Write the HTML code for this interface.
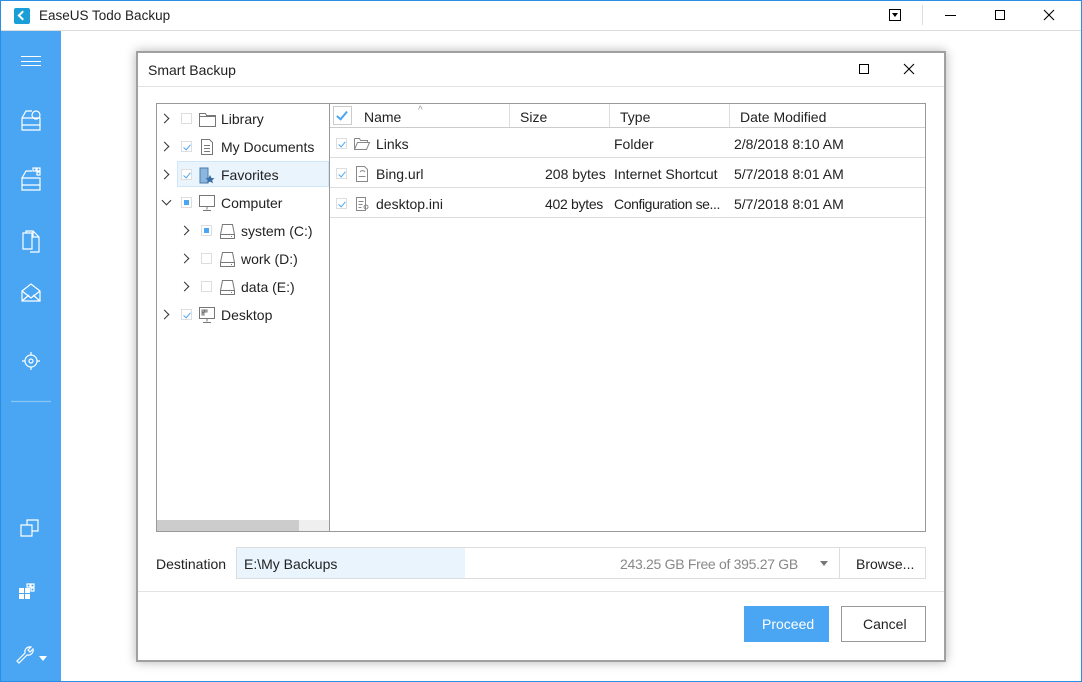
<!DOCTYPE html>
<html><head><style>
*{margin:0;padding:0;box-sizing:border-box}
body{width:1082px;height:682px;position:relative;overflow:hidden;background:#fff;font-family:"Liberation Sans",sans-serif;font-size:14px;color:#222}
.a{position:absolute}
.t{position:absolute;white-space:nowrap;line-height:16px;font-size:14px}
.cb{position:absolute;width:11px;height:11px;border:1px solid #ddd;background:#fff}
.cb.c::after{content:"";position:absolute;left:3px;top:1px;width:3px;height:6px;border:solid #4aa6f2;border-width:0 1.3px 1.3px 0;transform:rotate(40deg)}
.cb.p::after{content:"";position:absolute;left:2px;top:2px;width:5px;height:5px;background:#4aa6f2}
.chev{position:absolute;width:7px;height:7px;border:solid #333;border-width:1.2px 1.2px 0 0;transform:rotate(45deg)}
.chev.d{transform:rotate(135deg)}
.hl{position:absolute;height:1px;background:#ddd}
</style></head><body>
<div class="a" style="left:0;top:0;width:1082px;height:682px;border:1px solid #2b8ee6"></div>
<div class="a" style="left:14px;top:8px;width:16px;height:16px;background:#1a9ed8;border-radius:2px"></div>
<div class="a" style="left:19px;top:12px;width:7px;height:7px;border:solid #fff;border-width:0 0 2px 2px;transform:rotate(45deg)"></div>
<div class="t" style="left:39px;top:8px;font-size:13.5px">EaseUS Todo Backup</div>
<div class="a" style="left:889px;top:9px;width:12px;height:12px;border:1px solid #000"></div>
<div class="a" style="left:892px;top:13px;border:3px solid transparent;border-top:4px solid #000"></div>
<div class="a" style="left:922px;top:5px;width:1px;height:20px;background:#ddd"></div>
<div class="a" style="left:945px;top:15px;width:11px;height:1px;background:#000"></div>
<div class="a" style="left:995px;top:10px;width:10px;height:10px;border:1px solid #000"></div>
<svg class="a" style="left:1043px;top:9px" width="12" height="12" stroke="#000" stroke-width="1.1"><path d="M1 1l10 10M11 1L1 11"/></svg>
<div class="a" style="left:1px;top:30px;width:1080px;height:1px;background:#dcdcdc"></div>
<div class="a" style="left:1px;top:31px;width:60px;height:650px;background:#4aa6f2"></div>
<div class="a" style="left:21px;top:56px;width:20px;height:10px;border-top:1px solid #fff;border-bottom:1px solid #fff"></div>
<div class="a" style="left:21px;top:61px;width:20px;height:1px;background:#fff"></div>
<svg class="a" style="left:0;top:100px" width="62" height="580" fill="none" stroke="#fff" stroke-width="1.2">
<path d="M22 18h18v12H22zM22 18l4-7h6M22 25h18"/><circle cx="36" cy="15" r="4"/>
<path d="M22 78h18v12H22zM22 78l4-7h6M22 85h18"/><rect x="33" y="68" width="3" height="3"/><rect x="37" y="68" width="3" height="3"/><rect x="37" y="72" width="3" height="3"/>
<path d="M23 133h9v16h-9zM26 133v-2h7l6 6v15h-9M33 131v6h6"/>
<path d="M22 191l9-7 9 7v10H22zM22 191l9 7 9-7M22 201l7-6M40 201l-7-6"/>
<circle cx="31" cy="261" r="6"/><circle cx="31" cy="261" r="2"/><path d="M31 252v3M31 267v3M22 261h3M37 261h3"/>
<path d="M11 301.5h40" stroke-opacity=".35"/>
<path d="M21 425h11v11H21zM27 425v-5h11v11h-6"/>
<path d="M27 484h3v3h-3zM31 484h3v3h-3zM31 488h3v3h-3z"/>
<path d="M17 561l8-8a5 5 0 0 1 6-6l-3 3 2 2 3-3a5 5 0 0 1-6 6l-8 8z"/>
</svg>
<div class="a" style="left:19px;top:588px;width:5px;height:5px;background:#fff"></div><div class="a" style="left:25px;top:588px;width:5px;height:5px;background:#fff"></div><div class="a" style="left:19px;top:594px;width:5px;height:5px;background:#fff"></div><div class="a" style="left:25px;top:594px;width:5px;height:5px;background:#fff"></div>
<div class="a" style="left:39px;top:656px;border:4px solid transparent;border-top:5px solid #fff"></div>
<div class="a" style="left:136px;top:51px;width:810px;height:611px;border:2px solid #a0a0a0;box-shadow:0 0 10px rgba(0,0,0,.3);background:#fff"></div>
<div class="t" style="left:148px;top:62px">Smart Backup</div>
<div class="a" style="left:859px;top:64px;width:10px;height:10px;border:1px solid #000"></div>
<svg class="a" style="left:903px;top:63px" width="12" height="12" stroke="#000" stroke-width="1.1"><path d="M1 1l10 10M11 1L1 11"/></svg>
<div class="a" style="left:138px;top:86px;width:806px;height:1px;background:#e3e3e3"></div>
<div class="a" style="left:156px;top:103px;width:770px;height:429px;border:1px solid #999"></div>
<div class="a" style="left:329px;top:104px;width:1px;height:427px;background:#999"></div>
<div class="a" style="left:157px;top:520px;width:172px;height:11px;background:#efefef"></div>
<div class="a" style="left:157px;top:520px;width:142px;height:11px;background:#ccc"></div>
<div class="a" style="left:177px;top:161px;width:152px;height:26px;background:#e9f4fd;border:1px solid #cde6fa"></div>

<div class="chev" style="left:161px;top:115px"></div><div class="cb" style="left:181px;top:113px"></div>
<svg class="a" style="left:198px;top:110px" width="20" height="18" fill="none" stroke="#777"><path d="M1.5 3.5h6l1 2h9v11h-16z M1.5 6.5h16"/></svg>
<div class="t" style="left:221px;top:111px">Library</div>
<div class="chev" style="left:161px;top:143px"></div><div class="cb c" style="left:181px;top:141px"></div>
<svg class="a" style="left:198px;top:138px" width="20" height="18" fill="none" stroke="#777"><path d="M3.5 1.5h8l3 3v12h-11z M6 7.5h6M6 10.5h6M6 13.5h6"/></svg>
<div class="t" style="left:221px;top:139px">My Documents</div>
<div class="chev" style="left:161px;top:171px"></div><div class="cb c" style="left:181px;top:169px"></div>
<svg class="a" style="left:198px;top:166px" width="20" height="18"><path d="M2 2h8v15H2z" fill="#8cb6de" stroke="#4a7db0"/><path d="M12 9l1.5 3 3 .3-2.3 2 .8 3-3-1.7-3 1.7.8-3-2.3-2 3-.3z" fill="#3b6fa3"/></svg>
<div class="t" style="left:221px;top:167px">Favorites</div>
<div class="chev d" style="left:163px;top:197px"></div><div class="cb p" style="left:181px;top:197px"></div>
<svg class="a" style="left:198px;top:194px" width="20" height="18" fill="none" stroke="#777"><path d="M1.5 1.5h15v11h-15zM9 12.5v3M5 16.5h8"/></svg>
<div class="t" style="left:221px;top:195px">Computer</div>
<div class="chev" style="left:181px;top:227px"></div><div class="cb p" style="left:201px;top:225px"></div>
<svg class="a" style="left:218px;top:222px" width="20" height="18" fill="none" stroke="#777"><path d="M4.5 2.5h10l2 10v4h-14v-4zM2.5 12.5h14M13 14.5h1"/></svg>
<div class="t" style="left:241px;top:223px">system (C:)</div>
<div class="chev" style="left:181px;top:255px"></div><div class="cb" style="left:201px;top:253px"></div>
<svg class="a" style="left:218px;top:250px" width="20" height="18" fill="none" stroke="#777"><path d="M4.5 2.5h10l2 10v4h-14v-4zM2.5 12.5h14M13 14.5h1"/></svg>
<div class="t" style="left:241px;top:251px">work (D:)</div>
<div class="chev" style="left:181px;top:283px"></div><div class="cb" style="left:201px;top:281px"></div>
<svg class="a" style="left:218px;top:278px" width="20" height="18" fill="none" stroke="#777"><path d="M4.5 2.5h10l2 10v4h-14v-4zM2.5 12.5h14M13 14.5h1"/></svg>
<div class="t" style="left:241px;top:279px">data (E:)</div>
<div class="chev" style="left:161px;top:311px"></div><div class="cb c" style="left:181px;top:309px"></div>
<svg class="a" style="left:198px;top:306px" width="20" height="18" fill="none" stroke="#777"><path d="M1.5 1.5h15v11h-15zM9 12.5v3M5 16.5h8M4 4h2v2H4zM7 4h2v2H7zM4 7h2v2H4z"/></svg>
<div class="t" style="left:221px;top:307px">Desktop</div>

<div class="hl" style="left:330px;top:127px;width:595px;background:#ccc"></div>
<div class="a" style="left:333px;top:106px;width:19px;height:19px;border:1px solid #ccc"></div>
<div class="a" style="left:339px;top:109px;width:6px;height:11px;border:solid #4aa6f2;border-width:0 2px 2px 0;transform:rotate(40deg)"></div>
<div class="t" style="left:364px;top:109px">Name</div>
<div class="t" style="left:418px;top:103px;font-size:10px;color:#999">^</div>
<div class="a" style="left:509px;top:104px;width:1px;height:23px;background:#ddd"></div>
<div class="t" style="left:520px;top:109px">Size</div>
<div class="a" style="left:609px;top:104px;width:1px;height:23px;background:#ddd"></div>
<div class="t" style="left:620px;top:109px">Type</div>
<div class="a" style="left:729px;top:104px;width:1px;height:23px;background:#ddd"></div>
<div class="t" style="left:740px;top:109px">Date Modified</div>
<div class="hl" style="left:330px;top:157px;width:595px"></div>
<div class="hl" style="left:330px;top:187px;width:595px"></div>
<div class="hl" style="left:330px;top:217px;width:595px"></div>
<div class="cb c" style="left:336px;top:138px"></div>
<svg class="a" style="left:353px;top:135px" width="18" height="18" fill="none" stroke="#888"><path d="M1.5 3.5h5l1 2h7v2M1.5 3.5v11h12l3-7h-12l-3 7"/></svg>
<div class="t" style="left:376px;top:136px">Links</div>
<div class="t" style="left:614px;top:136px">Folder</div>
<div class="t" style="left:734px;top:136px">2/8/2018 8:10 AM</div>
<div class="cb c" style="left:336px;top:168px"></div>
<svg class="a" style="left:353px;top:165px" width="18" height="18" fill="none" stroke="#888"><path d="M3.5 1.5h8l3 3v12h-11zM5.5 11.5h7"/><path d="M7 7a3 3 0 0 1 5 0" /></svg>
<div class="t" style="left:376px;top:166px">Bing.url</div>
<div class="t" style="left:545px;top:166px">208 bytes</div>
<div class="t" style="left:614px;top:166px">Internet Shortcut</div>
<div class="t" style="left:734px;top:166px">5/7/2018 8:01 AM</div>
<div class="cb c" style="left:336px;top:198px"></div>
<svg class="a" style="left:353px;top:195px" width="18" height="18" fill="none" stroke="#888"><path d="M3.5 2.5h9v13h-9zM5.5 6.5h5M5.5 9.5h4M5.5 12.5h3"/><circle cx="13" cy="12" r="2"/></svg>
<div class="t" style="left:376px;top:196px">desktop.ini</div>
<div class="t" style="left:545px;top:196px;letter-spacing:-0.3px">402 bytes</div>
<div class="t" style="left:614px;top:196px;letter-spacing:-0.4px">Configuration se...</div>
<div class="t" style="left:734px;top:196px">5/7/2018 8:01 AM</div>

<div class="t" style="left:156px;top:556px">Destination</div>
<div class="a" style="left:236px;top:547px;width:690px;height:32px;border:1px solid #ddd"></div>
<div class="a" style="left:237px;top:548px;width:228px;height:30px;background:#e9f4fd"></div>
<div class="t" style="left:244px;top:556px">E:\My Backups</div>
<div class="t" style="left:620px;top:556px;color:#888;letter-spacing:-0.3px">243.25 GB Free of 395.27 GB</div>
<div class="a" style="left:820px;top:561px;border:4px solid transparent;border-top:5px solid #777"></div>
<div class="a" style="left:839px;top:548px;width:1px;height:30px;background:#ddd"></div>
<div class="t" style="left:856px;top:556px">Browse...</div>
<div class="a" style="left:138px;top:591px;width:806px;height:1px;background:#e3e3e3"></div>
<div class="a" style="left:744px;top:606px;width:85px;height:36px;background:#4aa6f2"></div>
<div class="t" style="left:762px;top:616px;color:#fff">Proceed</div>
<div class="a" style="left:841px;top:606px;width:85px;height:36px;border:1px solid #999"></div>
<div class="t" style="left:863px;top:616px">Cancel</div>
</body></html>
